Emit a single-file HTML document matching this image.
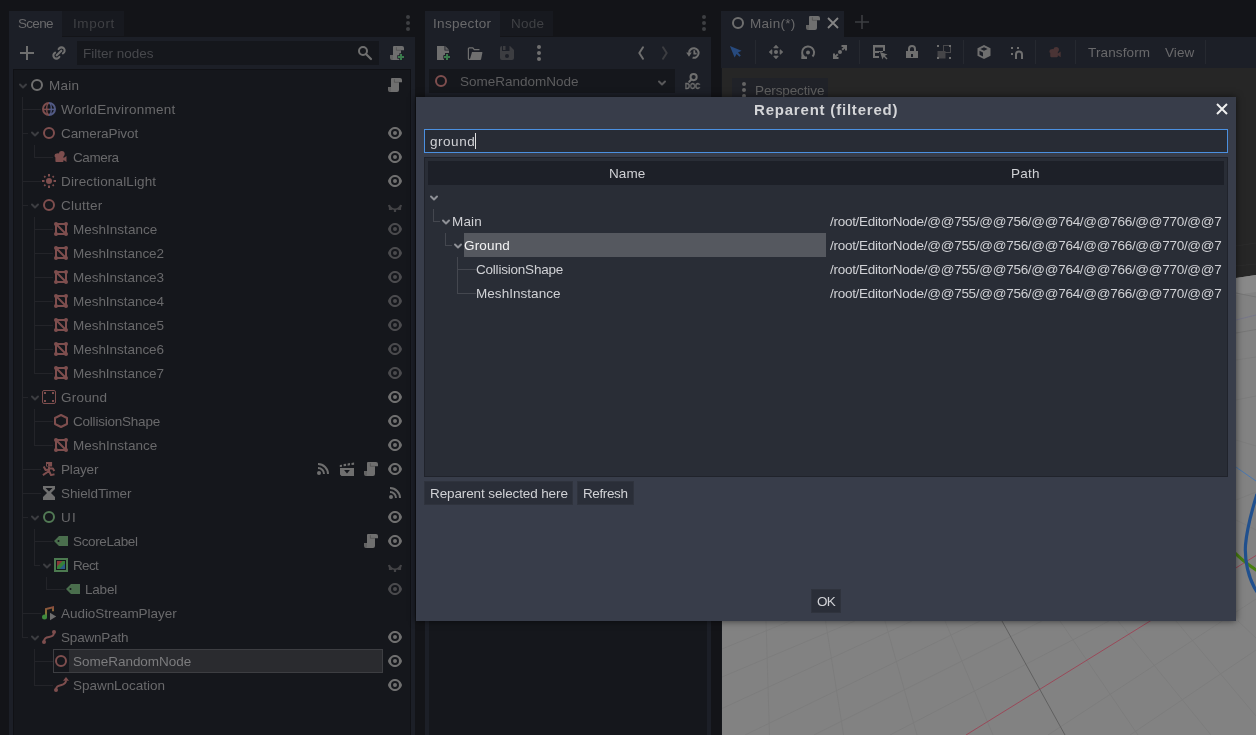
<!DOCTYPE html>
<html><head><meta charset="utf-8"><title>Godot - Reparent</title>
<style>
html,body{margin:0;padding:0}
body{width:1256px;height:735px;overflow:hidden;position:relative;background:#131418;font-family:"Liberation Sans",sans-serif}
body>div,body>svg,body>span{position:absolute;display:block}
body>span{white-space:pre;line-height:20px;height:20px;will-change:transform}
</style></head><body>
<div style="left:9px;top:11px;width:53px;height:26px;background:#1c1f27;"></div>
<div style="left:62px;top:11px;width:62px;height:25px;background:#17191f;"></div>
<div style="left:9px;top:37px;width:406px;height:698px;background:#1c1f27;"></div>
<div style="left:77px;top:41px;width:302px;height:24px;background:#15171c;"></div>
<div style="left:13px;top:69px;width:398px;height:666px;background:#15171c;box-shadow:inset 1px 1px 0 #101115,inset -1px 0 0 #101115;"></div>
<span style="left:17.90px;top:13.50px;font-size:13.5px;color:#69696b;letter-spacing:-0.695px">Scene</span>
<span style="left:72.50px;top:13.50px;font-size:13.5px;color:#3f4044;letter-spacing:0.608px">Import</span>
<span style="left:82.90px;top:43.50px;font-size:13.5px;color:#47484c;letter-spacing:-0.003px">Filter nodes</span>
<svg style="left:400px;top:15px" width="16" height="16" viewBox="0 0 16 16"><circle cx="8" cy="2" r="2" fill="#3e3f43"/><circle cx="8" cy="8" r="2" fill="#3e3f43"/><circle cx="8" cy="14" r="2" fill="#3e3f43"/></svg>
<svg style="left:19px;top:45px" width="16" height="16" viewBox="0 0 16 16"><path d="M7 1v6H1v2h6v6h2V9h6V7H9V1z" fill="#6f6f6f"/></svg>
<svg style="left:51px;top:45px" width="16" height="16" viewBox="0 0 16 16"><g fill="none" stroke="#6f6f6f" stroke-width="2.100" stroke-linecap="round"><path d="M7.600 4.100A3.200 3.200 0 1 1 11.900 8.400"/><path d="M8.400 11.900A3.200 3.200 0 1 1 4.100 7.600"/><path d="M5.700 10.300 10.300 5.700"/></g></svg>
<svg style="left:357px;top:45px" width="16" height="16" viewBox="0 0 16 16"><circle cx="6" cy="6" r="4" fill="none" stroke="#6f6f6f" stroke-width="2"/><path d="M9 9 14 14" stroke="#6f6f6f" stroke-width="2.200" fill="none" stroke-linecap="round"/></svg>
<svg style="left:389px;top:45px" width="16" height="16" viewBox="0 0 16 16"><path d="M5 1H13a2 2 0 0 1 2 2V5.300H12V13a2 2 0 0 1-2 2H3a2 2 0 0 1-2-2V10H4V2a1 1 0 0 1 1-1z" fill="#6f6f6f"/><path d="M7.400 2.200V5.300H12" fill="none" stroke="#000" stroke-opacity=".22" stroke-width=".9"/><path d="M1 10H4V14.800H2.500A1.800 1.800 0 0 1 1 13z" fill="#000" fill-opacity=".1"/><path d="M11 9v2H9v2h2v2h2v-2h2v-2h-2V9z" fill="#3a7a4c" stroke="#1c1f27" stroke-width="1.400" paint-order="stroke"/></svg>
<div style="left:22px;top:97px;width:1px;height:541px;background:#232429;"></div>
<div style="left:22px;top:109px;width:19px;height:1px;background:#232429;"></div>
<div style="left:22px;top:133px;width:6px;height:1px;background:#232429;"></div>
<div style="left:22px;top:181px;width:19px;height:1px;background:#232429;"></div>
<div style="left:22px;top:205px;width:6px;height:1px;background:#232429;"></div>
<div style="left:22px;top:397px;width:6px;height:1px;background:#232429;"></div>
<div style="left:22px;top:469px;width:19px;height:1px;background:#232429;"></div>
<div style="left:22px;top:493px;width:19px;height:1px;background:#232429;"></div>
<div style="left:22px;top:517px;width:6px;height:1px;background:#232429;"></div>
<div style="left:22px;top:613px;width:19px;height:1px;background:#232429;"></div>
<div style="left:22px;top:637px;width:6px;height:1px;background:#232429;"></div>
<div style="left:34px;top:145px;width:1px;height:13px;background:#232429;"></div>
<div style="left:34px;top:157px;width:19px;height:1px;background:#232429;"></div>
<div style="left:34px;top:217px;width:1px;height:157px;background:#232429;"></div>
<div style="left:34px;top:229px;width:19px;height:1px;background:#232429;"></div>
<div style="left:34px;top:253px;width:19px;height:1px;background:#232429;"></div>
<div style="left:34px;top:277px;width:19px;height:1px;background:#232429;"></div>
<div style="left:34px;top:301px;width:19px;height:1px;background:#232429;"></div>
<div style="left:34px;top:325px;width:19px;height:1px;background:#232429;"></div>
<div style="left:34px;top:349px;width:19px;height:1px;background:#232429;"></div>
<div style="left:34px;top:373px;width:19px;height:1px;background:#232429;"></div>
<div style="left:34px;top:409px;width:1px;height:37px;background:#232429;"></div>
<div style="left:34px;top:421px;width:19px;height:1px;background:#232429;"></div>
<div style="left:34px;top:445px;width:19px;height:1px;background:#232429;"></div>
<div style="left:34px;top:529px;width:1px;height:37px;background:#232429;"></div>
<div style="left:34px;top:541px;width:19px;height:1px;background:#232429;"></div>
<div style="left:34px;top:565px;width:6px;height:1px;background:#232429;"></div>
<div style="left:34px;top:649px;width:1px;height:37px;background:#232429;"></div>
<div style="left:34px;top:661px;width:19px;height:1px;background:#232429;"></div>
<div style="left:34px;top:685px;width:19px;height:1px;background:#232429;"></div>
<div style="left:46px;top:577px;width:1px;height:13px;background:#232429;"></div>
<div style="left:46px;top:589px;width:19px;height:1px;background:#232429;"></div>
<div style="left:53px;top:649px;width:330px;height:24px;background:#2a2b2f;box-shadow:inset 0 0 0 1px #3d3e42;"></div>
<div style="left:54px;top:650px;width:15px;height:22px;background:#15171c;"></div>
<svg style="left:29px;top:77px" width="16" height="16" viewBox="0 0 16 16"><circle cx="8" cy="8" r="5" fill="none" stroke="#6f6f6f" stroke-width="2"/></svg>
<svg style="left:15px;top:77.5px" width="16" height="16" viewBox="0 0 16 16"><path d="M5 6.500 8 9.500 11 6.500" fill="none" stroke="#3c3d41" stroke-width="2" stroke-linecap="round" stroke-linejoin="round"/></svg>
<span style="left:48.90px;top:75.50px;font-size:13.5px;color:#69696b;letter-spacing:0.246px">Main</span>
<svg style="left:387px;top:77px" width="16" height="16" viewBox="0 0 16 16"><path d="M5 1H13a2 2 0 0 1 2 2V5.300H12V13a2 2 0 0 1-2 2H3a2 2 0 0 1-2-2V10H4V2a1 1 0 0 1 1-1z" fill="#6f6f6f"/><path d="M7.400 2.200V5.300H12" fill="none" stroke="#000" stroke-opacity=".22" stroke-width=".9"/><path d="M1 10H4V14.800H2.500A1.800 1.800 0 0 1 1 13z" fill="#000" fill-opacity=".1"/></svg>
<svg style="left:41px;top:101px" width="16" height="16" viewBox="0 0 16 16"><defs><clipPath id="wl"><rect x="0" y="0" width="8" height="16"/></clipPath><clipPath id="wr"><rect x="8" y="0" width="8" height="16"/></clipPath><g id="globe" fill="none" stroke="currentColor"><circle cx="8" cy="8" r="6" stroke-width="2"/><path d="M2 8.400h12" stroke-width="1.600"/><ellipse cx="8" cy="8" rx="2.300" ry="5.600" stroke-width="1.400"/></g></defs><use href="#globe" clip-path="url(#wl)" color="#7e4e4e"/><use href="#globe" clip-path="url(#wr)" color="#525a84"/></svg>
<span style="left:60.70px;top:99.50px;font-size:13.5px;color:#69696b;letter-spacing:0.227px">WorldEnvironment</span>
<svg style="left:41px;top:125px" width="16" height="16" viewBox="0 0 16 16"><circle cx="8" cy="8" r="5" fill="none" stroke="#7e4e4e" stroke-width="2"/></svg>
<svg style="left:27px;top:125.5px" width="16" height="16" viewBox="0 0 16 16"><path d="M5 6.500 8 9.500 11 6.500" fill="none" stroke="#3c3d41" stroke-width="2" stroke-linecap="round" stroke-linejoin="round"/></svg>
<span style="left:60.90px;top:123.50px;font-size:13.5px;color:#69696b;letter-spacing:-0.083px">CameraPivot</span>
<svg style="left:387px;top:125px" width="16" height="16" viewBox="0 0 16 16"><path d="m8 2c-2.5567 0-5.7907 1.9477-6.9551 5.7051a1 1 0 0 0-.00586.57031c1.1244 3.9354 4.4609 5.7246 6.9609 5.7246s5.8365-1.7892 6.9609-5.7246a1 1 0 0 0 0-.55273c-1.1003-3.7876-4.4066-5.7227-6.9609-5.7227zm0 2a4 4 0 0 1 4 4 4 4 0 0 1-4 4 4 4 0 0 1-4-4 4 4 0 0 1 4-4zm0 2a2 2 0 0 0-2 2 2 2 0 0 0 2 2 2 2 0 0 0 2-2 2 2 0 0 0-2-2z" fill="#6f6f6f"/></svg>
<svg style="left:53px;top:149px" width="16" height="16" viewBox="0 0 16 16"><path d="M9.500 2a3 3 0 0 0-2.950 2.470A2.200 2.200 0 0 0 4.500 4.600a2.200 2.200 0 0 0-2.200 2.200 2.200 2.200 0 0 0 .9 1.700V12c0 .55.450 1 1 1H10.300c.55 0 1-.45 1-1v-1l3 2V7l-3 2V7.400A3 3 0 0 0 12.500 5a3 3 0 0 0-3-3z" fill="#7e4e4e" transform="translate(-.8 0)"/></svg>
<span style="left:73.10px;top:147.50px;font-size:13.5px;color:#69696b;letter-spacing:-0.383px">Camera</span>
<svg style="left:387px;top:149px" width="16" height="16" viewBox="0 0 16 16"><path d="m8 2c-2.5567 0-5.7907 1.9477-6.9551 5.7051a1 1 0 0 0-.00586.57031c1.1244 3.9354 4.4609 5.7246 6.9609 5.7246s5.8365-1.7892 6.9609-5.7246a1 1 0 0 0 0-.55273c-1.1003-3.7876-4.4066-5.7227-6.9609-5.7227zm0 2a4 4 0 0 1 4 4 4 4 0 0 1-4 4 4 4 0 0 1-4-4 4 4 0 0 1 4-4zm0 2a2 2 0 0 0-2 2 2 2 0 0 0 2 2 2 2 0 0 0 2-2 2 2 0 0 0-2-2z" fill="#6f6f6f"/></svg>
<svg style="left:41px;top:173px" width="16" height="16" viewBox="0 0 16 16"><circle cx="8" cy="8" r="3" fill="#7e4e4e"/><g fill="#7e4e4e"><rect x="7" y="1" width="2" height="2.500"/><rect x="7" y="12.500" width="2" height="2.500"/><rect x="1" y="7" width="2.500" height="2"/><rect x="12.500" y="7" width="2.500" height="2"/><path d="M3.800 2.600 5 3.800 3.800 5 2.600 3.800zM12.200 2.600 13.400 3.800 12.200 5 11 3.800zM3.800 11 5 12.200 3.800 13.400 2.600 12.200zM12.200 11 13.400 12.200 12.200 13.400 11 12.200z"/></g></svg>
<span style="left:60.90px;top:171.50px;font-size:13.5px;color:#69696b;letter-spacing:0.137px">DirectionalLight</span>
<svg style="left:387px;top:173px" width="16" height="16" viewBox="0 0 16 16"><path d="m8 2c-2.5567 0-5.7907 1.9477-6.9551 5.7051a1 1 0 0 0-.00586.57031c1.1244 3.9354 4.4609 5.7246 6.9609 5.7246s5.8365-1.7892 6.9609-5.7246a1 1 0 0 0 0-.55273c-1.1003-3.7876-4.4066-5.7227-6.9609-5.7227zm0 2a4 4 0 0 1 4 4 4 4 0 0 1-4 4 4 4 0 0 1-4-4 4 4 0 0 1 4-4zm0 2a2 2 0 0 0-2 2 2 2 0 0 0 2 2 2 2 0 0 0 2-2 2 2 0 0 0-2-2z" fill="#6f6f6f"/></svg>
<svg style="left:41px;top:197px" width="16" height="16" viewBox="0 0 16 16"><circle cx="8" cy="8" r="5" fill="none" stroke="#7e4e4e" stroke-width="2"/></svg>
<svg style="left:27px;top:197.5px" width="16" height="16" viewBox="0 0 16 16"><path d="M5 6.500 8 9.500 11 6.500" fill="none" stroke="#3c3d41" stroke-width="2" stroke-linecap="round" stroke-linejoin="round"/></svg>
<span style="left:60.90px;top:195.50px;font-size:13.5px;color:#69696b;letter-spacing:0.240px">Clutter</span>
<svg style="left:387px;top:197px" width="16" height="16" viewBox="0 0 16 16"><path d="M.9 8.200 2.900 7.700C3.800 10.100 5.800 11.500 8 11.500S12.200 10.100 13.100 7.700L15.100 8.200 14.100 10.800V13H11.400L10.300 12.500 9.100 13V15H6.900V13L5.700 12.500 4.600 13H1.900V10.800z" fill="#434346"/></svg>
<svg style="left:53px;top:221px" width="16" height="16" viewBox="0 0 16 16"><g fill="#7e4e4e"><circle cx="3" cy="3" r="2"/><circle cx="13" cy="3" r="2"/><circle cx="3" cy="13" r="2"/><circle cx="13" cy="13" r="2"/></g><path d="M3 3h10v10H3zM3 3l10 10" fill="none" stroke="#7e4e4e" stroke-width="2"/></svg>
<span style="left:73.10px;top:219.50px;font-size:13.5px;color:#69696b;letter-spacing:0.014px">MeshInstance</span>
<svg style="left:387px;top:221px" width="16" height="16" viewBox="0 0 16 16"><path d="m8 2c-2.5567 0-5.7907 1.9477-6.9551 5.7051a1 1 0 0 0-.00586.57031c1.1244 3.9354 4.4609 5.7246 6.9609 5.7246s5.8365-1.7892 6.9609-5.7246a1 1 0 0 0 0-.55273c-1.1003-3.7876-4.4066-5.7227-6.9609-5.7227zm0 2a4 4 0 0 1 4 4 4 4 0 0 1-4 4 4 4 0 0 1-4-4 4 4 0 0 1 4-4zm0 2a2 2 0 0 0-2 2 2 2 0 0 0 2 2 2 2 0 0 0 2-2 2 2 0 0 0-2-2z" fill="#4a4a4d"/></svg>
<svg style="left:53px;top:245px" width="16" height="16" viewBox="0 0 16 16"><g fill="#7e4e4e"><circle cx="3" cy="3" r="2"/><circle cx="13" cy="3" r="2"/><circle cx="3" cy="13" r="2"/><circle cx="13" cy="13" r="2"/></g><path d="M3 3h10v10H3zM3 3l10 10" fill="none" stroke="#7e4e4e" stroke-width="2"/></svg>
<span style="left:73.10px;top:243.50px;font-size:13.5px;color:#69696b;letter-spacing:-0.038px">MeshInstance2</span>
<svg style="left:387px;top:245px" width="16" height="16" viewBox="0 0 16 16"><path d="m8 2c-2.5567 0-5.7907 1.9477-6.9551 5.7051a1 1 0 0 0-.00586.57031c1.1244 3.9354 4.4609 5.7246 6.9609 5.7246s5.8365-1.7892 6.9609-5.7246a1 1 0 0 0 0-.55273c-1.1003-3.7876-4.4066-5.7227-6.9609-5.7227zm0 2a4 4 0 0 1 4 4 4 4 0 0 1-4 4 4 4 0 0 1-4-4 4 4 0 0 1 4-4zm0 2a2 2 0 0 0-2 2 2 2 0 0 0 2 2 2 2 0 0 0 2-2 2 2 0 0 0-2-2z" fill="#4a4a4d"/></svg>
<svg style="left:53px;top:269px" width="16" height="16" viewBox="0 0 16 16"><g fill="#7e4e4e"><circle cx="3" cy="3" r="2"/><circle cx="13" cy="3" r="2"/><circle cx="3" cy="13" r="2"/><circle cx="13" cy="13" r="2"/></g><path d="M3 3h10v10H3zM3 3l10 10" fill="none" stroke="#7e4e4e" stroke-width="2"/></svg>
<span style="left:73.10px;top:267.50px;font-size:13.5px;color:#69696b;letter-spacing:-0.038px">MeshInstance3</span>
<svg style="left:387px;top:269px" width="16" height="16" viewBox="0 0 16 16"><path d="m8 2c-2.5567 0-5.7907 1.9477-6.9551 5.7051a1 1 0 0 0-.00586.57031c1.1244 3.9354 4.4609 5.7246 6.9609 5.7246s5.8365-1.7892 6.9609-5.7246a1 1 0 0 0 0-.55273c-1.1003-3.7876-4.4066-5.7227-6.9609-5.7227zm0 2a4 4 0 0 1 4 4 4 4 0 0 1-4 4 4 4 0 0 1-4-4 4 4 0 0 1 4-4zm0 2a2 2 0 0 0-2 2 2 2 0 0 0 2 2 2 2 0 0 0 2-2 2 2 0 0 0-2-2z" fill="#4a4a4d"/></svg>
<svg style="left:53px;top:293px" width="16" height="16" viewBox="0 0 16 16"><g fill="#7e4e4e"><circle cx="3" cy="3" r="2"/><circle cx="13" cy="3" r="2"/><circle cx="3" cy="13" r="2"/><circle cx="13" cy="13" r="2"/></g><path d="M3 3h10v10H3zM3 3l10 10" fill="none" stroke="#7e4e4e" stroke-width="2"/></svg>
<span style="left:73.10px;top:291.50px;font-size:13.5px;color:#69696b;letter-spacing:-0.038px">MeshInstance4</span>
<svg style="left:387px;top:293px" width="16" height="16" viewBox="0 0 16 16"><path d="m8 2c-2.5567 0-5.7907 1.9477-6.9551 5.7051a1 1 0 0 0-.00586.57031c1.1244 3.9354 4.4609 5.7246 6.9609 5.7246s5.8365-1.7892 6.9609-5.7246a1 1 0 0 0 0-.55273c-1.1003-3.7876-4.4066-5.7227-6.9609-5.7227zm0 2a4 4 0 0 1 4 4 4 4 0 0 1-4 4 4 4 0 0 1-4-4 4 4 0 0 1 4-4zm0 2a2 2 0 0 0-2 2 2 2 0 0 0 2 2 2 2 0 0 0 2-2 2 2 0 0 0-2-2z" fill="#4a4a4d"/></svg>
<svg style="left:53px;top:317px" width="16" height="16" viewBox="0 0 16 16"><g fill="#7e4e4e"><circle cx="3" cy="3" r="2"/><circle cx="13" cy="3" r="2"/><circle cx="3" cy="13" r="2"/><circle cx="13" cy="13" r="2"/></g><path d="M3 3h10v10H3zM3 3l10 10" fill="none" stroke="#7e4e4e" stroke-width="2"/></svg>
<span style="left:73.10px;top:315.50px;font-size:13.5px;color:#69696b;letter-spacing:-0.038px">MeshInstance5</span>
<svg style="left:387px;top:317px" width="16" height="16" viewBox="0 0 16 16"><path d="m8 2c-2.5567 0-5.7907 1.9477-6.9551 5.7051a1 1 0 0 0-.00586.57031c1.1244 3.9354 4.4609 5.7246 6.9609 5.7246s5.8365-1.7892 6.9609-5.7246a1 1 0 0 0 0-.55273c-1.1003-3.7876-4.4066-5.7227-6.9609-5.7227zm0 2a4 4 0 0 1 4 4 4 4 0 0 1-4 4 4 4 0 0 1-4-4 4 4 0 0 1 4-4zm0 2a2 2 0 0 0-2 2 2 2 0 0 0 2 2 2 2 0 0 0 2-2 2 2 0 0 0-2-2z" fill="#4a4a4d"/></svg>
<svg style="left:53px;top:341px" width="16" height="16" viewBox="0 0 16 16"><g fill="#7e4e4e"><circle cx="3" cy="3" r="2"/><circle cx="13" cy="3" r="2"/><circle cx="3" cy="13" r="2"/><circle cx="13" cy="13" r="2"/></g><path d="M3 3h10v10H3zM3 3l10 10" fill="none" stroke="#7e4e4e" stroke-width="2"/></svg>
<span style="left:73.10px;top:339.50px;font-size:13.5px;color:#69696b;letter-spacing:-0.038px">MeshInstance6</span>
<svg style="left:387px;top:341px" width="16" height="16" viewBox="0 0 16 16"><path d="m8 2c-2.5567 0-5.7907 1.9477-6.9551 5.7051a1 1 0 0 0-.00586.57031c1.1244 3.9354 4.4609 5.7246 6.9609 5.7246s5.8365-1.7892 6.9609-5.7246a1 1 0 0 0 0-.55273c-1.1003-3.7876-4.4066-5.7227-6.9609-5.7227zm0 2a4 4 0 0 1 4 4 4 4 0 0 1-4 4 4 4 0 0 1-4-4 4 4 0 0 1 4-4zm0 2a2 2 0 0 0-2 2 2 2 0 0 0 2 2 2 2 0 0 0 2-2 2 2 0 0 0-2-2z" fill="#4a4a4d"/></svg>
<svg style="left:53px;top:365px" width="16" height="16" viewBox="0 0 16 16"><g fill="#7e4e4e"><circle cx="3" cy="3" r="2"/><circle cx="13" cy="3" r="2"/><circle cx="3" cy="13" r="2"/><circle cx="13" cy="13" r="2"/></g><path d="M3 3h10v10H3zM3 3l10 10" fill="none" stroke="#7e4e4e" stroke-width="2"/></svg>
<span style="left:73.10px;top:363.50px;font-size:13.5px;color:#69696b;letter-spacing:-0.038px">MeshInstance7</span>
<svg style="left:387px;top:365px" width="16" height="16" viewBox="0 0 16 16"><path d="m8 2c-2.5567 0-5.7907 1.9477-6.9551 5.7051a1 1 0 0 0-.00586.57031c1.1244 3.9354 4.4609 5.7246 6.9609 5.7246s5.8365-1.7892 6.9609-5.7246a1 1 0 0 0 0-.55273c-1.1003-3.7876-4.4066-5.7227-6.9609-5.7227zm0 2a4 4 0 0 1 4 4 4 4 0 0 1-4 4 4 4 0 0 1-4-4 4 4 0 0 1 4-4zm0 2a2 2 0 0 0-2 2 2 2 0 0 0 2 2 2 2 0 0 0 2-2 2 2 0 0 0-2-2z" fill="#4a4a4d"/></svg>
<svg style="left:41px;top:389px" width="16" height="16" viewBox="0 0 16 16"><rect x="1.500" y="1.500" width="13" height="13" rx="1.500" fill="none" stroke="#7e4e4e" stroke-width="1"/><g fill="#7e4e4e"><rect x="3" y="3" width="2" height="2"/><rect x="11" y="3" width="2" height="2"/><rect x="3" y="11" width="2" height="2"/><rect x="11" y="11" width="2" height="2"/></g></svg>
<svg style="left:27px;top:389.5px" width="16" height="16" viewBox="0 0 16 16"><path d="M5 6.500 8 9.500 11 6.500" fill="none" stroke="#3c3d41" stroke-width="2" stroke-linecap="round" stroke-linejoin="round"/></svg>
<span style="left:60.90px;top:387.50px;font-size:13.5px;color:#69696b;letter-spacing:0.214px">Ground</span>
<svg style="left:387px;top:389px" width="16" height="16" viewBox="0 0 16 16"><path d="m8 2c-2.5567 0-5.7907 1.9477-6.9551 5.7051a1 1 0 0 0-.00586.57031c1.1244 3.9354 4.4609 5.7246 6.9609 5.7246s5.8365-1.7892 6.9609-5.7246a1 1 0 0 0 0-.55273c-1.1003-3.7876-4.4066-5.7227-6.9609-5.7227zm0 2a4 4 0 0 1 4 4 4 4 0 0 1-4 4 4 4 0 0 1-4-4 4 4 0 0 1 4-4zm0 2a2 2 0 0 0-2 2 2 2 0 0 0 2 2 2 2 0 0 0 2-2 2 2 0 0 0-2-2z" fill="#6f6f6f"/></svg>
<svg style="left:53px;top:413px" width="16" height="16" viewBox="0 0 16 16"><path d="M8 2 14 5v6l-6 3-6-3V5z" fill="none" stroke="#7e4e4e" stroke-width="2" stroke-linejoin="round"/></svg>
<span style="left:73.10px;top:411.50px;font-size:13.5px;color:#69696b;letter-spacing:-0.220px">CollisionShape</span>
<svg style="left:387px;top:413px" width="16" height="16" viewBox="0 0 16 16"><path d="m8 2c-2.5567 0-5.7907 1.9477-6.9551 5.7051a1 1 0 0 0-.00586.57031c1.1244 3.9354 4.4609 5.7246 6.9609 5.7246s5.8365-1.7892 6.9609-5.7246a1 1 0 0 0 0-.55273c-1.1003-3.7876-4.4066-5.7227-6.9609-5.7227zm0 2a4 4 0 0 1 4 4 4 4 0 0 1-4 4 4 4 0 0 1-4-4 4 4 0 0 1 4-4zm0 2a2 2 0 0 0-2 2 2 2 0 0 0 2 2 2 2 0 0 0 2-2 2 2 0 0 0-2-2z" fill="#6f6f6f"/></svg>
<svg style="left:53px;top:437px" width="16" height="16" viewBox="0 0 16 16"><g fill="#7e4e4e"><circle cx="3" cy="3" r="2"/><circle cx="13" cy="3" r="2"/><circle cx="3" cy="13" r="2"/><circle cx="13" cy="13" r="2"/></g><path d="M3 3h10v10H3zM3 3l10 10" fill="none" stroke="#7e4e4e" stroke-width="2"/></svg>
<span style="left:73.10px;top:435.50px;font-size:13.5px;color:#69696b;letter-spacing:0.014px">MeshInstance</span>
<svg style="left:387px;top:437px" width="16" height="16" viewBox="0 0 16 16"><path d="m8 2c-2.5567 0-5.7907 1.9477-6.9551 5.7051a1 1 0 0 0-.00586.57031c1.1244 3.9354 4.4609 5.7246 6.9609 5.7246s5.8365-1.7892 6.9609-5.7246a1 1 0 0 0 0-.55273c-1.1003-3.7876-4.4066-5.7227-6.9609-5.7227zm0 2a4 4 0 0 1 4 4 4 4 0 0 1-4 4 4 4 0 0 1-4-4 4 4 0 0 1 4-4zm0 2a2 2 0 0 0-2 2 2 2 0 0 0 2 2 2 2 0 0 0 2-2 2 2 0 0 0-2-2z" fill="#6f6f6f"/></svg>
<svg style="left:41px;top:461px" width="16" height="16" viewBox="0 0 16 16"><path d="M5 1h6.100v4.600H5zM6 3v1.900h1.100V3z" fill="#7e4e4e" fill-rule="evenodd"/><path d="M8 5.500V10M8 8.400 4.600 9 2.700 5.500M8 7.500 11.800 7.400 13.300 10.100M8 10 1.900 14.100M8 10 10 14.100 13.500 13.300" fill="none" stroke="#7e4e4e" stroke-width="2" stroke-linejoin="round"/></svg>
<span style="left:60.90px;top:459.50px;font-size:13.5px;color:#69696b;letter-spacing:-0.173px">Player</span>
<svg style="left:387px;top:461px" width="16" height="16" viewBox="0 0 16 16"><path d="m8 2c-2.5567 0-5.7907 1.9477-6.9551 5.7051a1 1 0 0 0-.00586.57031c1.1244 3.9354 4.4609 5.7246 6.9609 5.7246s5.8365-1.7892 6.9609-5.7246a1 1 0 0 0 0-.55273c-1.1003-3.7876-4.4066-5.7227-6.9609-5.7227zm0 2a4 4 0 0 1 4 4 4 4 0 0 1-4 4 4 4 0 0 1-4-4 4 4 0 0 1 4-4zm0 2a2 2 0 0 0-2 2 2 2 0 0 0 2 2 2 2 0 0 0 2-2 2 2 0 0 0-2-2z" fill="#6f6f6f"/></svg>
<svg style="left:363px;top:461px" width="16" height="16" viewBox="0 0 16 16"><path d="M5 1H13a2 2 0 0 1 2 2V5.300H12V13a2 2 0 0 1-2 2H3a2 2 0 0 1-2-2V10H4V2a1 1 0 0 1 1-1z" fill="#6f6f6f"/><path d="M7.400 2.200V5.300H12" fill="none" stroke="#000" stroke-opacity=".22" stroke-width=".9"/><path d="M1 10H4V14.800H2.500A1.800 1.800 0 0 1 1 13z" fill="#000" fill-opacity=".1"/></svg>
<svg style="left:339px;top:461px" width="16" height="16" viewBox="0 0 16 16"><path d="M1 7H15V15H2.500L1 13.500zM5.100 9 8 12.400 10.900 9z" fill="#6f6f6f" fill-rule="evenodd"/><g fill="#6f6f6f"><path d="M.8 4 3 3.700V5.700L.8 6zM4.600 3.100 7.100 2.700V4.900L4.600 5.300zM8.600 2.500 11 2.100V4.300L8.600 4.700zM12.500 1.900 15.100 1.500V3.700L12.500 4.100z"/></g></svg>
<svg style="left:315px;top:461px" width="16" height="16" viewBox="0 0 16 16"><circle cx="4" cy="12" r="2" fill="#6f6f6f"/><g fill="none" stroke="#6f6f6f" stroke-width="2"><path d="M3 7A6 6 0 0 1 9 13"/><path d="M3 3A10 10 0 0 1 13 13"/></g></svg>
<svg style="left:41px;top:485px" width="16" height="16" viewBox="0 0 16 16"><path d="M2 1v3l4 4-4 4v3h12v-3l-4-4 4-4V1zm2.500 2h7L8 6.500z" fill="#6f6f6f"/></svg>
<span style="left:60.70px;top:483.50px;font-size:13.5px;color:#69696b;letter-spacing:-0.102px">ShieldTimer</span>
<svg style="left:387px;top:485px" width="16" height="16" viewBox="0 0 16 16"><circle cx="4" cy="12" r="2" fill="#6f6f6f"/><g fill="none" stroke="#6f6f6f" stroke-width="2"><path d="M3 7A6 6 0 0 1 9 13"/><path d="M3 3A10 10 0 0 1 13 13"/></g></svg>
<svg style="left:41px;top:509px" width="16" height="16" viewBox="0 0 16 16"><circle cx="8" cy="8" r="5" fill="none" stroke="#527a55" stroke-width="2"/></svg>
<svg style="left:27px;top:509.5px" width="16" height="16" viewBox="0 0 16 16"><path d="M5 6.500 8 9.500 11 6.500" fill="none" stroke="#3c3d41" stroke-width="2" stroke-linecap="round" stroke-linejoin="round"/></svg>
<span style="left:60.90px;top:507.50px;font-size:13.5px;color:#69696b;letter-spacing:1.300px">UI</span>
<svg style="left:387px;top:509px" width="16" height="16" viewBox="0 0 16 16"><path d="m8 2c-2.5567 0-5.7907 1.9477-6.9551 5.7051a1 1 0 0 0-.00586.57031c1.1244 3.9354 4.4609 5.7246 6.9609 5.7246s5.8365-1.7892 6.9609-5.7246a1 1 0 0 0 0-.55273c-1.1003-3.7876-4.4066-5.7227-6.9609-5.7227zm0 2a4 4 0 0 1 4 4 4 4 0 0 1-4 4 4 4 0 0 1-4-4 4 4 0 0 1 4-4zm0 2a2 2 0 0 0-2 2 2 2 0 0 0 2 2 2 2 0 0 0 2-2 2 2 0 0 0-2-2z" fill="#6f6f6f"/></svg>
<svg style="left:53px;top:533px" width="16" height="16" viewBox="0 0 16 16"><path d="M6 3 1 8l5 5h9V3zM5.500 7a1 1 0 0 1 1 1 1 1 0 0 1-1 1 1 1 0 0 1-1-1 1 1 0 0 1 1-1z" fill="#4a6e4d" fill-rule="evenodd"/></svg>
<span style="left:73.10px;top:531.50px;font-size:13.5px;color:#69696b;letter-spacing:-0.366px">ScoreLabel</span>
<svg style="left:387px;top:533px" width="16" height="16" viewBox="0 0 16 16"><path d="m8 2c-2.5567 0-5.7907 1.9477-6.9551 5.7051a1 1 0 0 0-.00586.57031c1.1244 3.9354 4.4609 5.7246 6.9609 5.7246s5.8365-1.7892 6.9609-5.7246a1 1 0 0 0 0-.55273c-1.1003-3.7876-4.4066-5.7227-6.9609-5.7227zm0 2a4 4 0 0 1 4 4 4 4 0 0 1-4 4 4 4 0 0 1-4-4 4 4 0 0 1 4-4zm0 2a2 2 0 0 0-2 2 2 2 0 0 0 2 2 2 2 0 0 0 2-2 2 2 0 0 0-2-2z" fill="#6f6f6f"/></svg>
<svg style="left:363px;top:533px" width="16" height="16" viewBox="0 0 16 16"><path d="M5 1H13a2 2 0 0 1 2 2V5.300H12V13a2 2 0 0 1-2 2H3a2 2 0 0 1-2-2V10H4V2a1 1 0 0 1 1-1z" fill="#6f6f6f"/><path d="M7.400 2.200V5.300H12" fill="none" stroke="#000" stroke-opacity=".22" stroke-width=".9"/><path d="M1 10H4V14.800H2.500A1.800 1.800 0 0 1 1 13z" fill="#000" fill-opacity=".1"/></svg>
<svg style="left:53px;top:557px" width="16" height="16" viewBox="0 0 16 16"><path d="M1 1v14h14V1zm2 2h10v10H3z" fill="#4c7a50" fill-rule="evenodd"/><rect x="4" y="4" width="8" height="8" fill="#2a5c88"/><path d="M4 4h8L4 12z" fill="#8a3838"/><path d="M4 9.500 9.500 4H12v2.500L6.500 12H4z" fill="#367f38"/></svg>
<svg style="left:39px;top:557.5px" width="16" height="16" viewBox="0 0 16 16"><path d="M5 6.500 8 9.500 11 6.500" fill="none" stroke="#3c3d41" stroke-width="2" stroke-linecap="round" stroke-linejoin="round"/></svg>
<span style="left:73.10px;top:555.50px;font-size:13.5px;color:#69696b;letter-spacing:-0.686px">Rect</span>
<svg style="left:387px;top:557px" width="16" height="16" viewBox="0 0 16 16"><path d="M.9 8.200 2.900 7.700C3.800 10.100 5.800 11.500 8 11.500S12.200 10.100 13.100 7.700L15.100 8.200 14.100 10.800V13H11.400L10.300 12.500 9.100 13V15H6.900V13L5.700 12.500 4.600 13H1.900V10.800z" fill="#434346"/></svg>
<svg style="left:65px;top:581px" width="16" height="16" viewBox="0 0 16 16"><path d="M6 3 1 8l5 5h9V3zM5.500 7a1 1 0 0 1 1 1 1 1 0 0 1-1 1 1 1 0 0 1-1-1 1 1 0 0 1 1-1z" fill="#4a6e4d" fill-rule="evenodd"/></svg>
<span style="left:85.00px;top:579.50px;font-size:13.5px;color:#69696b;letter-spacing:-0.208px">Label</span>
<svg style="left:387px;top:581px" width="16" height="16" viewBox="0 0 16 16"><path d="m8 2c-2.5567 0-5.7907 1.9477-6.9551 5.7051a1 1 0 0 0-.00586.57031c1.1244 3.9354 4.4609 5.7246 6.9609 5.7246s5.8365-1.7892 6.9609-5.7246a1 1 0 0 0 0-.55273c-1.1003-3.7876-4.4066-5.7227-6.9609-5.7227zm0 2a4 4 0 0 1 4 4 4 4 0 0 1-4 4 4 4 0 0 1-4-4 4 4 0 0 1 4-4zm0 2a2 2 0 0 0-2 2 2 2 0 0 0 2 2 2 2 0 0 0 2-2 2 2 0 0 0-2-2z" fill="#4a4a4d"/></svg>
<svg style="left:41px;top:605px" width="16" height="16" viewBox="0 0 16 16"><defs><linearGradient id="ag" x1="0" y1="1" x2="0" y2="0"><stop offset="0" stop-color="#3f8a3e"/><stop offset=".45" stop-color="#8a7236"/><stop offset="1" stop-color="#8a463e"/></linearGradient></defs><path d="M4 3.200 13 1V6.200H11V3.600L6 4.800V12.500H4z" fill="url(#ag)"/><circle cx="3.500" cy="12" r="2.500" fill="#3f8a3e"/><path d="M9 7.800V15.200L15.200 11.500z" fill="#6f6f6f"/></svg>
<span style="left:60.50px;top:603.50px;font-size:13.5px;color:#69696b;letter-spacing:-0.038px">AudioStreamPlayer</span>
<svg style="left:41px;top:629px" width="16" height="16" viewBox="0 0 16 16"><path d="M3 13C3 9 5 8.500 8 8S13 7 13 3" fill="none" stroke="#7e4e4e" stroke-width="2"/><circle cx="3" cy="13" r="2" fill="#7e4e4e"/><circle cx="13" cy="3" r="2" fill="#7e4e4e"/></svg>
<svg style="left:27px;top:629.5px" width="16" height="16" viewBox="0 0 16 16"><path d="M5 6.500 8 9.500 11 6.500" fill="none" stroke="#3c3d41" stroke-width="2" stroke-linecap="round" stroke-linejoin="round"/></svg>
<span style="left:61.00px;top:627.50px;font-size:13.5px;color:#69696b;letter-spacing:-0.181px">SpawnPath</span>
<svg style="left:387px;top:629px" width="16" height="16" viewBox="0 0 16 16"><path d="m8 2c-2.5567 0-5.7907 1.9477-6.9551 5.7051a1 1 0 0 0-.00586.57031c1.1244 3.9354 4.4609 5.7246 6.9609 5.7246s5.8365-1.7892 6.9609-5.7246a1 1 0 0 0 0-.55273c-1.1003-3.7876-4.4066-5.7227-6.9609-5.7227zm0 2a4 4 0 0 1 4 4 4 4 0 0 1-4 4 4 4 0 0 1-4-4 4 4 0 0 1 4-4zm0 2a2 2 0 0 0-2 2 2 2 0 0 0 2 2 2 2 0 0 0 2-2 2 2 0 0 0-2-2z" fill="#6f6f6f"/></svg>
<svg style="left:53px;top:653px" width="16" height="16" viewBox="0 0 16 16"><circle cx="8" cy="8" r="5" fill="none" stroke="#7e4e4e" stroke-width="2"/></svg>
<span style="left:72.80px;top:651.50px;font-size:13.5px;color:#7c7c7e;letter-spacing:-0.021px">SomeRandomNode</span>
<svg style="left:387px;top:653px" width="16" height="16" viewBox="0 0 16 16"><path d="m8 2c-2.5567 0-5.7907 1.9477-6.9551 5.7051a1 1 0 0 0-.00586.57031c1.1244 3.9354 4.4609 5.7246 6.9609 5.7246s5.8365-1.7892 6.9609-5.7246a1 1 0 0 0 0-.55273c-1.1003-3.7876-4.4066-5.7227-6.9609-5.7227zm0 2a4 4 0 0 1 4 4 4 4 0 0 1-4 4 4 4 0 0 1-4-4 4 4 0 0 1 4-4zm0 2a2 2 0 0 0-2 2 2 2 0 0 0 2 2 2 2 0 0 0 2-2 2 2 0 0 0-2-2z" fill="#6f6f6f"/></svg>
<svg style="left:53px;top:677px" width="16" height="16" viewBox="0 0 16 16"><path d="M3 13C3 9 5.500 8.800 8.500 8 11 7.300 13 6.500 13 3.500" fill="none" stroke="#7e4e4e" stroke-width="2"/><circle cx="3" cy="13" r="2" fill="#7e4e4e"/><path d="M13 0 16 3.800H10z" fill="#7e4e4e"/></svg>
<span style="left:72.80px;top:675.50px;font-size:13.5px;color:#69696b;letter-spacing:-0.035px">SpawnLocation</span>
<svg style="left:387px;top:677px" width="16" height="16" viewBox="0 0 16 16"><path d="m8 2c-2.5567 0-5.7907 1.9477-6.9551 5.7051a1 1 0 0 0-.00586.57031c1.1244 3.9354 4.4609 5.7246 6.9609 5.7246s5.8365-1.7892 6.9609-5.7246a1 1 0 0 0 0-.55273c-1.1003-3.7876-4.4066-5.7227-6.9609-5.7227zm0 2a4 4 0 0 1 4 4 4 4 0 0 1-4 4 4 4 0 0 1-4-4 4 4 0 0 1 4-4zm0 2a2 2 0 0 0-2 2 2 2 0 0 0 2 2 2 2 0 0 0 2-2 2 2 0 0 0-2-2z" fill="#6f6f6f"/></svg>
<div style="left:425px;top:11px;width:75px;height:26px;background:#1c1f27;"></div>
<div style="left:500px;top:11px;width:53px;height:25px;background:#17191f;"></div>
<div style="left:425px;top:37px;width:286px;height:698px;background:#1c1f27;"></div>
<div style="left:429px;top:69px;width:246px;height:24px;background:#15171c;"></div>
<div style="left:429px;top:125px;width:278px;height:610px;background:#15171c;"></div>
<span style="left:433.40px;top:13.50px;font-size:13.5px;color:#69696b;letter-spacing:0.309px">Inspector</span>
<span style="left:511.00px;top:13.50px;font-size:13.5px;color:#3f4044;letter-spacing:0.242px">Node</span>
<svg style="left:696px;top:15px" width="16" height="16" viewBox="0 0 16 16"><circle cx="8" cy="2" r="2" fill="#3e3f43"/><circle cx="8" cy="8" r="2" fill="#3e3f43"/><circle cx="8" cy="14" r="2" fill="#3e3f43"/></svg>
<svg style="left:435px;top:45px" width="16" height="16" viewBox="0 0 16 16"><path d="M2 1V15H9V10H10V8H14V5.500H9.500V1z" fill="#6f6f6f"/><path d="M10.300 1v3.700H14z" fill="#6f6f6f" fill-opacity=".85"/><path d="M11 9v2H9v2h2v2h2v-2h2v-2h-2V9z" fill="#3a7a4c" stroke="#1c1f27" stroke-width="1.400" paint-order="stroke"/></svg>
<svg style="left:467px;top:45px" width="16" height="16" viewBox="0 0 16 16"><path d="M2.600 14.400H2.300a.9.900 0 0 1-.9-.9V3.700a.9.900 0 0 1 .9-.9H5.800L7.300 4.700H12" fill="none" stroke="#6f6f6f" stroke-width="1.200" stroke-linecap="round"/><path d="M5 7H14.800a.600.600 0 0 1 .600.750L14.100 14.200a1 1 0 0 1-1 .8H2.700z" fill="#6f6f6f"/></svg>
<svg style="left:499px;top:45px" width="16" height="16" viewBox="0 0 16 16"><path d="M3 1a2 2 0 0 0-2 2v10a2 2 0 0 0 2 2h10a2 2 0 0 0 2-2V5l-4-4h-.5v5H3zm1 0v4h2.500V1zm4 8a2 2 0 0 1 2 2 2 2 0 0 1-2 2 2 2 0 0 1-2-2 2 2 0 0 1 2-2z" fill="#3c3d41" fill-rule="evenodd"/></svg>
<svg style="left:531px;top:45px" width="16" height="16" viewBox="0 0 16 16"><circle cx="8" cy="2" r="2" fill="#6f6f6f"/><circle cx="8" cy="8" r="2" fill="#6f6f6f"/><circle cx="8" cy="14" r="2" fill="#6f6f6f"/></svg>
<svg style="left:633px;top:45px" width="16" height="16" viewBox="0 0 16 16"><path d="M10 2.300 6.300 8 10 13.700" fill="none" stroke="#6f6f6f" stroke-width="2" stroke-linejoin="round" stroke-linecap="round"/></svg>
<svg style="left:657px;top:45px" width="16" height="16" viewBox="0 0 16 16"><path d="M6 2.300 9.700 8 6 13.700" fill="none" stroke="#3c3d41" stroke-width="2" stroke-linejoin="round" stroke-linecap="round"/></svg>
<svg style="left:685px;top:45px" width="16" height="16" viewBox="0 0 16 16"><path d="M4 7.800A4.800 4.800 0 1 1 7.600 12.700" fill="none" stroke="#6f6f6f" stroke-width="2"/><path d="M1.200 7.400H6.800L4 11.800z" fill="#6f6f6f"/><path d="M9.300 5.200V8.600H11.600" fill="none" stroke="#6f6f6f" stroke-width="1.800"/></svg>
<svg style="left:433px;top:73px" width="16" height="16" viewBox="0 0 16 16"><circle cx="8" cy="8" r="5" fill="none" stroke="#7e4e4e" stroke-width="2"/></svg>
<span style="left:459.80px;top:71.50px;font-size:13.5px;color:#5c5c5e;letter-spacing:0.003px">SomeRandomNode</span>
<svg style="left:654px;top:74.5px" width="16" height="16" viewBox="0 0 16 16"><path d="M5 6.500 8 9.500 11 6.500" fill="none" stroke="#58585a" stroke-width="2" stroke-linecap="round" stroke-linejoin="round"/></svg>
<svg style="left:685px;top:72px" width="16" height="16" viewBox="0 0 16 16"><circle cx="8.600" cy="5.100" r="3.100" fill="none" stroke="#6f6f6f" stroke-width="2"/><path d="M6.500 7.200 4.200 9.700" stroke="#6f6f6f" stroke-width="2" fill="none" stroke-linecap="round"/></svg>
<span style="left:684.600px;top:82px;font:bold 8.500px/8px 'Liberation Sans',sans-serif;color:#6f6f6f;transform:scaleX(.8);transform-origin:0 0;-webkit-text-stroke:.35px #6f6f6f">DOC</span>
<div style="left:721px;top:11px;width:123px;height:26px;background:#1c1f27;"></div>
<div style="left:721px;top:37px;width:535px;height:31px;background:#1c1f27;"></div>
<svg style="left:730px;top:15px" width="16" height="16" viewBox="0 0 16 16"><circle cx="8" cy="8" r="5" fill="none" stroke="#6f6f6f" stroke-width="2"/></svg>
<span style="left:749.90px;top:13.50px;font-size:13.5px;color:#69696b;letter-spacing:0.299px">Main(*)</span>
<svg style="left:805px;top:15px" width="16" height="16" viewBox="0 0 16 16"><path d="M5 1H13a2 2 0 0 1 2 2V5.300H12V13a2 2 0 0 1-2 2H3a2 2 0 0 1-2-2V10H4V2a1 1 0 0 1 1-1z" fill="#6f6f6f"/><path d="M7.400 2.200V5.300H12" fill="none" stroke="#000" stroke-opacity=".22" stroke-width=".9"/><path d="M1 10H4V14.800H2.500A1.800 1.800 0 0 1 1 13z" fill="#000" fill-opacity=".1"/></svg>
<svg style="left:825px;top:15px" width="16" height="16" viewBox="0 0 16 16"><path d="M3 3l10 10M13 3 3 13" stroke="#858585" stroke-width="1.8" fill="none"/></svg>
<svg style="left:854px;top:14px" width="16" height="16" viewBox="0 0 16 16"><path d="M8 1v14M1 8h14" stroke="#3d3e42" stroke-width="1.600" fill="none"/></svg>
<svg style="left:728px;top:44px" width="16" height="16" viewBox="0 0 16 16"><path d="M1.900 1.900 13.600 6.700 10 8.600l2.800 2.800-1.400 1.400L8.600 10l-2 3.400z" fill="#274a7e"/></svg>
<div style="left:755px;top:40px;width:1px;height:24px;background:#262930;"></div>
<div style="left:859px;top:40px;width:1px;height:24px;background:#262930;"></div>
<div style="left:963px;top:40px;width:1px;height:24px;background:#262930;"></div>
<div style="left:1035px;top:40px;width:1px;height:24px;background:#262930;"></div>
<div style="left:1075px;top:40px;width:1px;height:24px;background:#262930;"></div>
<div style="left:1205px;top:40px;width:1px;height:24px;background:#262930;"></div>
<svg style="left:768px;top:44px" width="16" height="16" viewBox="0 0 16 16"><circle cx="8" cy="8" r="2" fill="#6f6f6f"/><path d="M8 1.300 10.200 3.800h-4.400zM8 14.700 5.800 12.200h4.400zM1.300 8 3.800 5.800v4.400zM14.700 8 12.200 10.200v-4.400z" fill="#6f6f6f" stroke="#6f6f6f" stroke-width="1" stroke-linejoin="round"/></svg>
<svg style="left:800px;top:44px" width="16" height="16" viewBox="0 0 16 16"><circle cx="8" cy="8.500" r="2" fill="#6f6f6f"/><path d="M4.500 13.200A6 6 0 1 1 12.500 12.500" fill="none" stroke="#6f6f6f" stroke-width="2"/><path d="M1.500 12.500h5.500v2.500H1.500z" fill="#6f6f6f"/><path d="M1.500 15V10l3 2z" fill="#6f6f6f"/></svg>
<svg style="left:832px;top:44px" width="16" height="16" viewBox="0 0 16 16"><circle cx="8" cy="8" r="2" fill="#6f6f6f"/><path d="M9.500 1H15v5.500h-2V4.400L10.900 6.500 9.500 5.100 11.600 3H9.500zM6.500 15H1V9.500h2v2.100L5.100 9.500l1.400 1.400L4.400 13h2.100z" fill="#6f6f6f"/></svg>
<svg style="left:872px;top:44px" width="16" height="16" viewBox="0 0 16 16"><path d="M1 1v13h6v-2H3v-3h4V7H3V3h8v4h2V1z" fill="#6f6f6f"/><path d="M3 3h8" stroke="#6f6f6f"/><path d="M8 8l2.500 7.500 1.300-2.700L14.500 15.500l1-1-2.700-2.700L15.500 10.500z" fill="#6f6f6f"/><path d="M3 7h8v1H3z" fill="#6f6f6f"/></svg>
<svg style="left:904px;top:44px" width="16" height="16" viewBox="0 0 16 16"><path d="M8 1a4 4 0 0 0-4 4v2H2v7h12V7h-2V5a4 4 0 0 0-4-4zm0 2a2 2 0 0 1 2 2v2H6V5a2 2 0 0 1 2-2zM7 10h2v3H7z" fill="#6f6f6f" fill-rule="evenodd"/></svg>
<svg style="left:936px;top:44px" width="16" height="16" viewBox="0 0 16 16"><rect x="7.500" y="1.500" width="7" height="7" fill="none" stroke="#48484b" stroke-width="1"/><rect x="1.500" y="7" width="8" height="7.500" fill="#454548"/><g fill="#6f6f6f"><rect x="1" y="1" width="2" height="2"/><rect x="13" y="1" width="2" height="2"/><rect x="1" y="13" width="2" height="2"/><rect x="13" y="13" width="2" height="2"/></g></svg>
<svg style="left:976px;top:44px" width="16" height="16" viewBox="0 0 16 16"><path d="M8 1 1.500 4.200v7.600L8 15l6.500-3.200V4.200zm0 2.200 3.600 1.800L8 6.800 4.400 5zM3.500 6.700l3.500 1.700v4l-3.500-1.700z" fill="#6f6f6f" fill-rule="evenodd"/></svg>
<svg style="left:1008px;top:44px" width="16" height="16" viewBox="0 0 16 16"><path d="M7 15V10.500a4 4 0 0 1 8 0V15H13V10.500a2 2 0 0 0-4 0V15z" fill="#6f6f6f"/><g fill="#6f6f6f"><rect x="3" y="3" width="2" height="2"/><rect x="9" y="3" width="2" height="2"/><rect x="3" y="9" width="2" height="2"/></g></svg>
<svg style="left:1048px;top:45px" width="15" height="15" viewBox="0 0 16 16"><path d="M9.500 2a3 3 0 0 0-2.950 2.470A2.200 2.200 0 0 0 4.500 4.600a2.200 2.200 0 0 0-2.200 2.200 2.200 2.200 0 0 0 .9 1.700V12c0 .55.450 1 1 1H10.300c.55 0 1-.45 1-1v-1l3 2V7l-3 2V7.400A3 3 0 0 0 12.500 5a3 3 0 0 0-3-3z" fill="#4a3435" transform="translate(-.8 0)"/></svg>
<span style="left:1087.90px;top:42.50px;font-size:13.5px;color:#69696b;letter-spacing:0.137px">Transform</span>
<span style="left:1165.20px;top:42.50px;font-size:13.5px;color:#69696b;letter-spacing:0.061px">View</span>
<svg style="left:721px;top:68px" width="535" height="667" viewBox="721 68 535 667">
<rect x="721" y="68" width="535" height="667" fill="#262626"/>
<g stroke="#2c2c2c" stroke-width="1" fill="none"><path d="M1236 246 1256 243M1236 266 1256 264"/></g>
<path d="M721 420 C 900 330 1100 290 1236 278 L1256 275 V735 H721z" fill="#828282"/>
<path d="M1236 278 1256 275V292L1236 295z" fill="#898989"/><path d="M1236 293 1256 297M1236 333 1256 329.500" stroke="#767676" fill="none"/><path d="M1236 320 1256 315" stroke="#77778a" fill="none"/>
<g stroke="#797979" stroke-width="1" fill="none" opacity=".6">
<path d="M722 649 790 621M722 677 855 621M722 708.500 912 621M745 735 980 621M814 735 1042 621M890 735 1109 621M1048 735 1236 612M1236 612 1256 599M1130 735 1256 650M1236 500 1256 492M1236 400 1256 396M1236 360 1256 357"/>
<path d="M766 621 769.500 735M825.500 621 843.600 735M885 621 917 735M945 621 993 735M1060 621 1138 735M1118 621 1211 735M1176 621 1256 716M1238 621 1256 638M1236 520 1256 530M1236 440 1256 446"/>
</g>
<path d="M966 735 1256 555.500" stroke="#9c4354" stroke-width="1" stroke-opacity=".9" fill="none"/>
<path d="M1002 621 1065 735" stroke="#606060" stroke-width="1" fill="none"/>
<path d="M1220 456 1256 481" stroke="#4a78b0" stroke-width="1" fill="none"/>
<path d="M1228 546 Q1242 561 1257 570.500" stroke="#487f10" stroke-width="3.200" fill="none"/>
<path d="M1257 494C1252 510 1247 528 1245.500 545 1244.500 560 1248 578 1257 592" stroke="#20508e" stroke-width="3.200" fill="none"/>
</svg>
<div style="left:721px;top:68px;width:1px;height:667px;background:#15171c;"></div>
<div style="left:732px;top:78px;width:96px;height:22px;background:#202228;"></div>
<svg style="left:736px;top:82px" width="16" height="16" viewBox="0 0 16 16"><circle cx="8" cy="2" r="2" fill="#646464"/><circle cx="8" cy="8" r="2" fill="#646464"/><circle cx="8" cy="14" r="2" fill="#646464"/></svg>
<span style="left:755.00px;top:80.50px;font-size:13.5px;color:#606060;letter-spacing:-0.113px">Perspective</span>
<div style="left:416px;top:97px;width:820px;height:524px;background:#383d4a;box-shadow:0 0 7px 0 rgba(0,0,0,.6);"></div>
<span style="left:753.90px;top:99.50px;font-size:15px;font-weight:bold;color:#d4d5d8;letter-spacing:0.795px">Reparent (filtered)</span>
<svg style="left:1214px;top:101px" width="16" height="16" viewBox="0 0 16 16"><path d="M3 3l10 10M13 3 3 13" stroke="#efefef" stroke-width="2" fill="none"/></svg>
<div style="left:424px;top:129px;width:804px;height:24px;background:#282c35;box-shadow:inset 0 0 0 1px #4b90e0;"></div>
<span style="left:429.90px;top:131.50px;font-size:13.5px;color:#d0d1d5;letter-spacing:0.533px">ground</span>
<div style="left:475px;top:133px;width:1px;height:16px;background:#e0e0e0;"></div>
<div style="left:424px;top:157px;width:804px;height:320px;background:#292d36;box-shadow:inset 0 0 0 1px #20232b;"></div>
<div style="left:428px;top:161px;width:796px;height:24px;background:#1d2028;"></div>
<span style="left:609.10px;top:163.50px;font-size:13.5px;color:#d0d1d5;letter-spacing:0.063px">Name</span>
<span style="left:1011.00px;top:163.50px;font-size:13.5px;color:#d0d1d5;letter-spacing:0.210px">Path</span>
<svg style="left:426px;top:189.5px" width="16" height="16" viewBox="0 0 16 16"><path d="M5 6.500 8 9.500 11 6.500" fill="none" stroke="#8e9096" stroke-width="2" stroke-linecap="round" stroke-linejoin="round"/></svg>
<div style="left:433px;top:209px;width:1px;height:13px;background:#44474f;"></div>
<div style="left:433px;top:221px;width:7px;height:1px;background:#44474f;"></div>
<svg style="left:438px;top:213.5px" width="16" height="16" viewBox="0 0 16 16"><path d="M5 6.500 8 9.500 11 6.500" fill="none" stroke="#8e9096" stroke-width="2" stroke-linecap="round" stroke-linejoin="round"/></svg>
<span style="left:452.00px;top:211.50px;font-size:13.5px;color:#d0d1d5;letter-spacing:0.180px">Main</span>
<div style="left:445px;top:233px;width:1px;height:13px;background:#44474f;"></div>
<div style="left:445px;top:245px;width:7px;height:1px;background:#44474f;"></div>
<div style="left:464px;top:233px;width:362px;height:24px;background:#55585f;"></div>
<svg style="left:450px;top:237.5px" width="16" height="16" viewBox="0 0 16 16"><path d="M5 6.500 8 9.500 11 6.500" fill="none" stroke="#8e9096" stroke-width="2" stroke-linecap="round" stroke-linejoin="round"/></svg>
<span style="left:464.00px;top:235.50px;font-size:13.5px;color:#f2f2f3;letter-spacing:0.154px">Ground</span>
<div style="left:457px;top:257px;width:1px;height:37px;background:#44474f;"></div>
<div style="left:457px;top:269px;width:19px;height:1px;background:#44474f;"></div>
<div style="left:457px;top:293px;width:19px;height:1px;background:#44474f;"></div>
<span style="left:475.90px;top:259.50px;font-size:13.5px;color:#d0d1d5;letter-spacing:-0.212px">CollisionShape</span>
<span style="left:475.90px;top:283.50px;font-size:13.5px;color:#d0d1d5;letter-spacing:0.041px">MeshInstance</span>
<span style="left:829.70px;top:211.50px;font-size:13.5px;color:#d0d1d5;letter-spacing:-0.279px">/root/EditorNode/@@755/@@756/@@764/@@766/@@770/@@7</span>
<span style="left:829.70px;top:235.50px;font-size:13.5px;color:#d0d1d5;letter-spacing:-0.279px">/root/EditorNode/@@755/@@756/@@764/@@766/@@770/@@7</span>
<span style="left:829.70px;top:259.50px;font-size:13.5px;color:#d0d1d5;letter-spacing:-0.279px">/root/EditorNode/@@755/@@756/@@764/@@766/@@770/@@7</span>
<span style="left:829.70px;top:283.50px;font-size:13.5px;color:#d0d1d5;letter-spacing:-0.279px">/root/EditorNode/@@755/@@756/@@764/@@766/@@770/@@7</span>
<div style="left:424px;top:481px;width:149px;height:24px;background:#2a2e38;box-shadow:inset 0 0 0 1px #2f333d;"></div>
<div style="left:577px;top:481px;width:57px;height:24px;background:#2a2e38;box-shadow:inset 0 0 0 1px #2f333d;"></div>
<div style="left:811px;top:589px;width:30px;height:24px;background:#2a2e38;box-shadow:inset 0 0 0 1px #2f333d;"></div>
<span style="left:429.70px;top:483.50px;font-size:13.5px;color:#d0d1d5;letter-spacing:-0.116px">Reparent selected here</span>
<span style="left:582.80px;top:483.50px;font-size:13.5px;color:#d0d1d5;letter-spacing:-0.395px">Refresh</span>
<span style="left:816.90px;top:591.50px;font-size:13.5px;color:#d0d1d5;letter-spacing:-0.805px">OK</span>
</body></html>
